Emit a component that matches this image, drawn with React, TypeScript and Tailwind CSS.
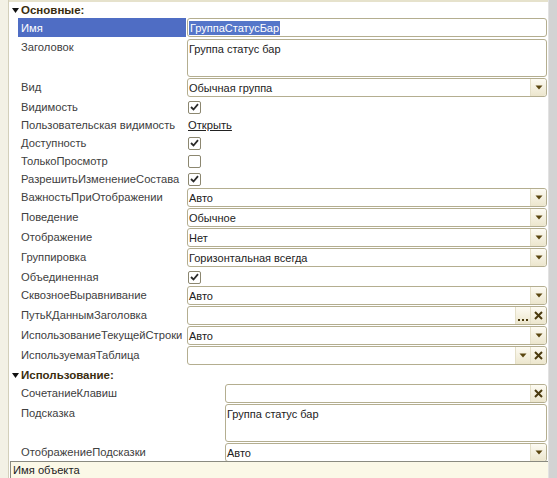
import React from "react";

const F = { fontFamily: '"Liberation Sans", Arial, sans-serif' };

function Arrow() {
  return (
    <svg width="8" height="5" viewBox="0 0 8 5">
      <path d="M0.5 0.5 L7.5 0.5 L4 4.5 Z" fill="#5a4610" />
    </svg>
  );
}

function DropBtn() {
  return (
    <div className="w-[16px] h-full flex items-center justify-center border-l border-[#e4dfc8] bg-linear-to-b from-[#fdfbf3] to-[#ece6cd] rounded-r-[2px]">
      <Arrow />
    </div>
  );
}

function XBtn() {
  return (
    <div className="w-[16px] h-full flex items-center justify-center border-l border-[#e4dfc8] bg-linear-to-b from-[#fdfbf3] to-[#ece6cd] rounded-r-[2px]">
      <svg width="9" height="9" viewBox="0 0 9 9">
        <path d="M1 1 L8 8 M8 1 L1 8" stroke="#4a3a0e" strokeWidth="2" />
      </svg>
    </div>
  );
}

function DotsBtn() {
  return (
    <div className="w-[15px] h-full flex items-end justify-center pb-[3px] border-l border-[#e4dfc8] bg-linear-to-b from-[#fdfbf3] to-[#ece6cd]">
      <div className="flex gap-[2px]">
        <div className="w-[2px] h-[2px] bg-[#4a3a0e]" />
        <div className="w-[2px] h-[2px] bg-[#4a3a0e]" />
        <div className="w-[2px] h-[2px] bg-[#4a3a0e]" />
      </div>
    </div>
  );
}

function Box({ children, right }: { children?: React.ReactNode; right?: React.ReactNode }) {
  return (
    <div className="flex-1 h-[19px] border border-[#b4ae90] rounded-[3px] bg-white flex items-stretch overflow-hidden">
      <div className="flex-1 pl-[1px] flex items-center text-[11px] leading-[14px] text-[#222] whitespace-nowrap">
        {children}
      </div>
      {right}
    </div>
  );
}

function Check({ on }: { on?: boolean }) {
  return (
    <div className="w-[13px] h-[13px] ml-[1px] border border-[#8c8770] rounded-[2px] bg-white flex items-center justify-center">
      {on && (
        <svg width="9" height="8" viewBox="0 0 9 8">
          <path d="M1 4 L3.5 6.5 L8 1.2" stroke="#2a2a2a" strokeWidth="1.8" fill="none" />
        </svg>
      )}
    </div>
  );
}

function Row({
  label,
  h,
  lw,
  children,
  top,
  sel,
}: {
  label: string;
  h: number;
  lw: string;
  children?: React.ReactNode;
  top?: boolean;
  sel?: boolean;
}) {
  return (
    <div className="flex pl-[9px] pr-[1px]" style={{ height: h }}>
      <div
        className={
          lw +
          " shrink-0 pl-[3px] text-[11.2px] leading-[14px] whitespace-nowrap overflow-hidden " +
          (top ? "pt-[2px] " : "") +
          (sel ? "bg-[#4f6dc4] text-white h-[19px] flex items-center" : "text-[#404040]")
        }
        style={!top && !sel ? { lineHeight: "19px", height: 19 } : undefined}
      >
        {label}
      </div>
      <div className={"flex-1 flex ml-[1px] " + (h === 18 ? "items-center" : "items-start")}>{children}</div>
    </div>
  );
}

function Header({ text, h }: { text: string; h: number }) {
  return (
    <div className="flex items-center pl-[3px]" style={{ height: h }}>
      <svg width="7" height="5" viewBox="0 0 7 5" className="mr-[2px]">
        <path d="M0 0 L7 0 L3.5 5 Z" fill="#111" />
      </svg>
      <span className="text-[11.5px] font-bold text-[#3a2d0f] leading-[14px]">{text}</span>
    </div>
  );
}

export default function App() {
  const A = "w-[168px]";
  const B = "w-[206px]";
  return (
    <div className="w-[557px] h-[478px] flex bg-white overflow-hidden" style={F}>
      <div className="w-[9px] h-full bg-[#f3f1e5] border-r border-[#d3cfba]" />
      <div className="flex-1 flex flex-col">
        <div className="h-[461px] overflow-hidden">
          <div className="h-[2px] bg-[#e6e2cc]" />
          <Header text="Основные:" h={16} />
          <Row label="Имя" h={20} lw={A} sel>
            <Box>
              <span className="bg-[#5576c9] text-white pl-[1px] pr-[1px]">ГруппаСтатусБар</span>
            </Box>
          </Row>
          <Row label="Заголовок" h={40} lw={A} top>
            <div className="flex-1 h-[38px] mt-[1px] border border-[#b4ae90] rounded-[3px] bg-white pl-[1px] pt-[2px] text-[11px] leading-[14px] text-[#222]">
              Группа статус бар
            </div>
          </Row>
          <Row label="Вид" h={20} lw={A}>
            <Box right={<DropBtn />}>Обычная группа</Box>
          </Row>
          <Row label="Видимость" h={18} lw={A}>
            <Check on />
          </Row>
          <Row label="Пользовательская видимость" h={18} lw={A}>
            <span className="text-[11.2px] leading-[14px] text-[#222] underline ml-[1px]">Открыть</span>
          </Row>
          <Row label="Доступность" h={18} lw={A}>
            <Check on />
          </Row>
          <Row label="ТолькоПросмотр" h={18} lw={A}>
            <Check />
          </Row>
          <Row label="РазрешитьИзменениеСостава" h={18} lw={A}>
            <Check on />
          </Row>
          <Row label="ВажностьПриОтображении" h={20} lw={A}>
            <Box right={<DropBtn />}>Авто</Box>
          </Row>
          <Row label="Поведение" h={20} lw={A}>
            <Box right={<DropBtn />}>Обычное</Box>
          </Row>
          <Row label="Отображение" h={20} lw={A}>
            <Box right={<DropBtn />}>Нет</Box>
          </Row>
          <Row label="Группировка" h={20} lw={A}>
            <Box right={<DropBtn />}>Горизонтальная всегда</Box>
          </Row>
          <Row label="Объединенная" h={18} lw={A}>
            <Check on />
          </Row>
          <Row label="СквозноеВыравнивание" h={20} lw={A}>
            <Box right={<DropBtn />}>Авто</Box>
          </Row>
          <Row label="ПутьКДаннымЗаголовка" h={20} lw={A}>
            <Box
              right={
                <>
                  <DotsBtn />
                  <XBtn />
                </>
              }
            />
          </Row>
          <Row label="ИспользованиеТекущейСтроки" h={20} lw={A}>
            <Box right={<DropBtn />}>Авто</Box>
          </Row>
          <Row label="ИспользуемаяТаблица" h={20} lw={A}>
            <Box
              right={
                <>
                  <div className="w-[15px] h-full flex items-center justify-center border-l border-[#e4dfc8] bg-linear-to-b from-[#fdfbf3] to-[#ece6cd]">
                    <Arrow />
                  </div>
                  <XBtn />
                </>
              }
            />
          </Row>
          <Header text="Использование:" h={18} />
          <Row label="СочетаниеКлавиш" h={20} lw={B}>
            <Box right={<XBtn />} />
          </Row>
          <Row label="Подсказка" h={39} lw={B} top>
            <div className="flex-1 h-[38px] border border-[#b4ae90] rounded-[3px] bg-white pl-[1px] pt-[2px] text-[11px] leading-[14px] text-[#222]">
              Группа статус бар
            </div>
          </Row>
          <Row label="ОтображениеПодсказки" h={20} lw={B}>
            <Box right={<DropBtn />}>Авто</Box>
          </Row>
        </div>
        <div className="h-[17px] ml-[1px] bg-[#fbf8e7] border-t border-l border-[#8a8a80] pl-[2px] flex items-center text-[11.2px] leading-[14px] text-[#222]">
          Имя объекта
        </div>
      </div>
      <div className="w-[9px] h-full bg-[#d3d3d3] border-l border-[#e2e2e2]" />
    </div>
  );
}
